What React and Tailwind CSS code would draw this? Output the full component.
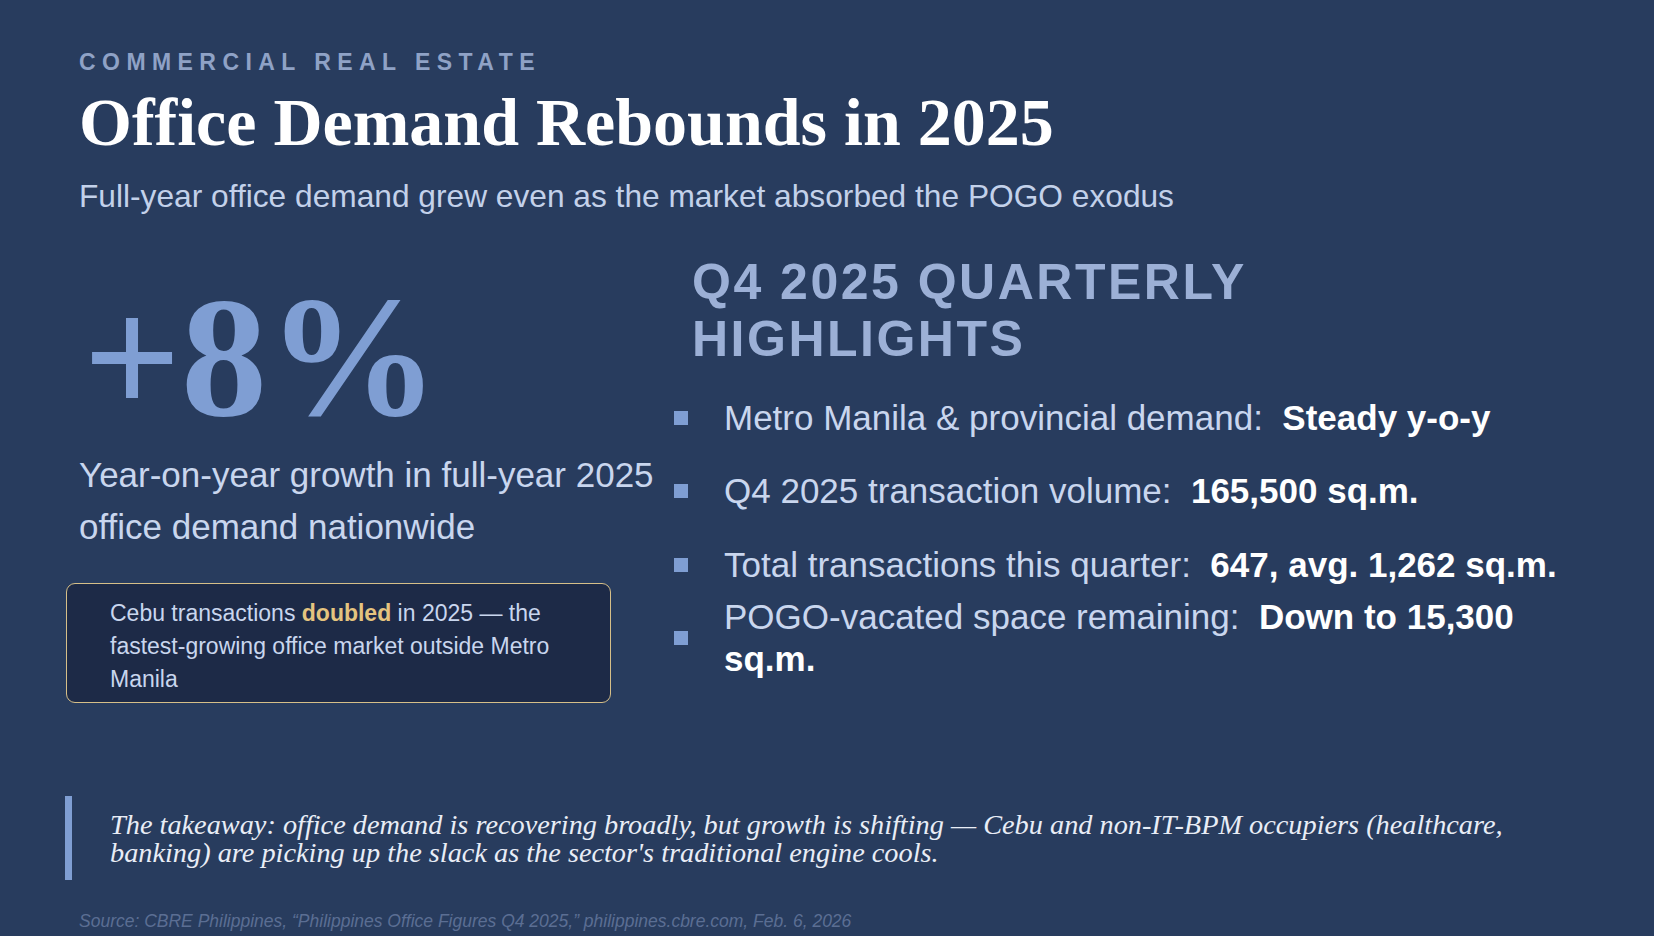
export default function App() {
  const sans = { fontFamily: '"Liberation Sans", Arial, sans-serif' };
  const serif = { fontFamily: '"Liberation Serif", "Times New Roman", serif' };
  const items = [
    ["Metro Manila & provincial demand:", "Steady y-o-y"],
    ["Q4 2025 transaction volume:", "165,500 sq.m."],
    ["Total transactions this quarter:", "647, avg. 1,262 sq.m."],
    ["POGO-vacated space remaining:", "Down to 15,300 sq.m."],
  ];
  return (
    <div
      className="w-[1654px] h-[936px] overflow-hidden bg-[#283c5e] flex flex-col px-[79px] pt-[48px] pb-[5px]"
      style={sans}
    >
      <div className="text-[23px] leading-[28px] font-bold tracking-[0.28em] text-[#8fa2c6]">
        COMMERCIAL REAL ESTATE
      </div>
      <h1 className="mt-[11px] text-[68px] leading-[70px] font-bold text-white" style={serif}>
        Office Demand Rebounds in 2025
      </h1>
      <p className="mt-[19px] text-[31.7px] leading-[40px] text-[#c3d1ea]">
        Full-year office demand grew even as the market absorbed the POGO exodus
      </p>

      <div className="flex">
        <div className="w-[590px] shrink-0 flex flex-col">
          <div
            className="mt-[55px] ml-[4px] text-[172px] leading-[172px] font-bold text-[#7f9ed3]"
            style={serif}
          >
            +8%
          </div>
          <p className="mt-[6px] text-[35px] leading-[52px] text-[#c9d6ee]">
            Year-on-year growth in full-year 2025 office demand nationwide
          </p>
          <div className="mt-[30px] -ml-[13px] w-[545px] rounded-[9px] border-[1.5px] border-[#d6bf88] bg-[#1d2a47] pl-[43px] pr-[40px] pt-[13px] pb-[6px] text-[23px] leading-[33px] text-[#c9d6ee]">
            Cebu transactions <span className="font-bold text-[#e5c47f]">doubled</span> in 2025 — the
            fastest-growing office market outside Metro Manila
          </div>
        </div>

        <div className="ml-[5px] flex-1 flex flex-col">
          <h2 className="mt-[38px] pl-[18px] max-w-[760px] text-[50px] leading-[57px] font-bold tracking-[0.05em] text-[#9cb0d6]">
            Q4 2025 QUARTERLY HIGHLIGHTS
          </h2>
          <ul className="mt-[13px] flex flex-col">
            {items.map(([label, value]) => (
              <li key={label} className="h-[73.5px] flex items-center">
                <span className="w-[14px] h-[14px] shrink-0 bg-[#7f9ed3]" />
                <span className="ml-[36px] text-[35px] leading-[42px] text-[#c9d6ee]">
                  {label}
                  {"\u00a0 "}
                  <span className="font-bold text-white">{value}</span>
                </span>
              </li>
            ))}
          </ul>
        </div>
      </div>

      <blockquote className="mt-auto -ml-[14px] border-l-[7px] border-[#7f9ed3] pl-[38px] py-[13px]">
        <p className="pt-[2px] text-[28.3px] leading-[28px] italic text-[#e8edf6]" style={serif}>
          The takeaway: office demand is recovering broadly, but growth is shifting — Cebu and non-IT-BPM
          occupiers (healthcare, banking) are picking up the slack as the sector's traditional engine cools.
        </p>
      </blockquote>
      <p className="mt-[31px] text-[17.5px] leading-[20px] italic text-[#5b6e93]">
        Source: CBRE Philippines, “Philippines Office Figures Q4 2025,” philippines.cbre.com, Feb. 6, 2026
      </p>
    </div>
  );
}
